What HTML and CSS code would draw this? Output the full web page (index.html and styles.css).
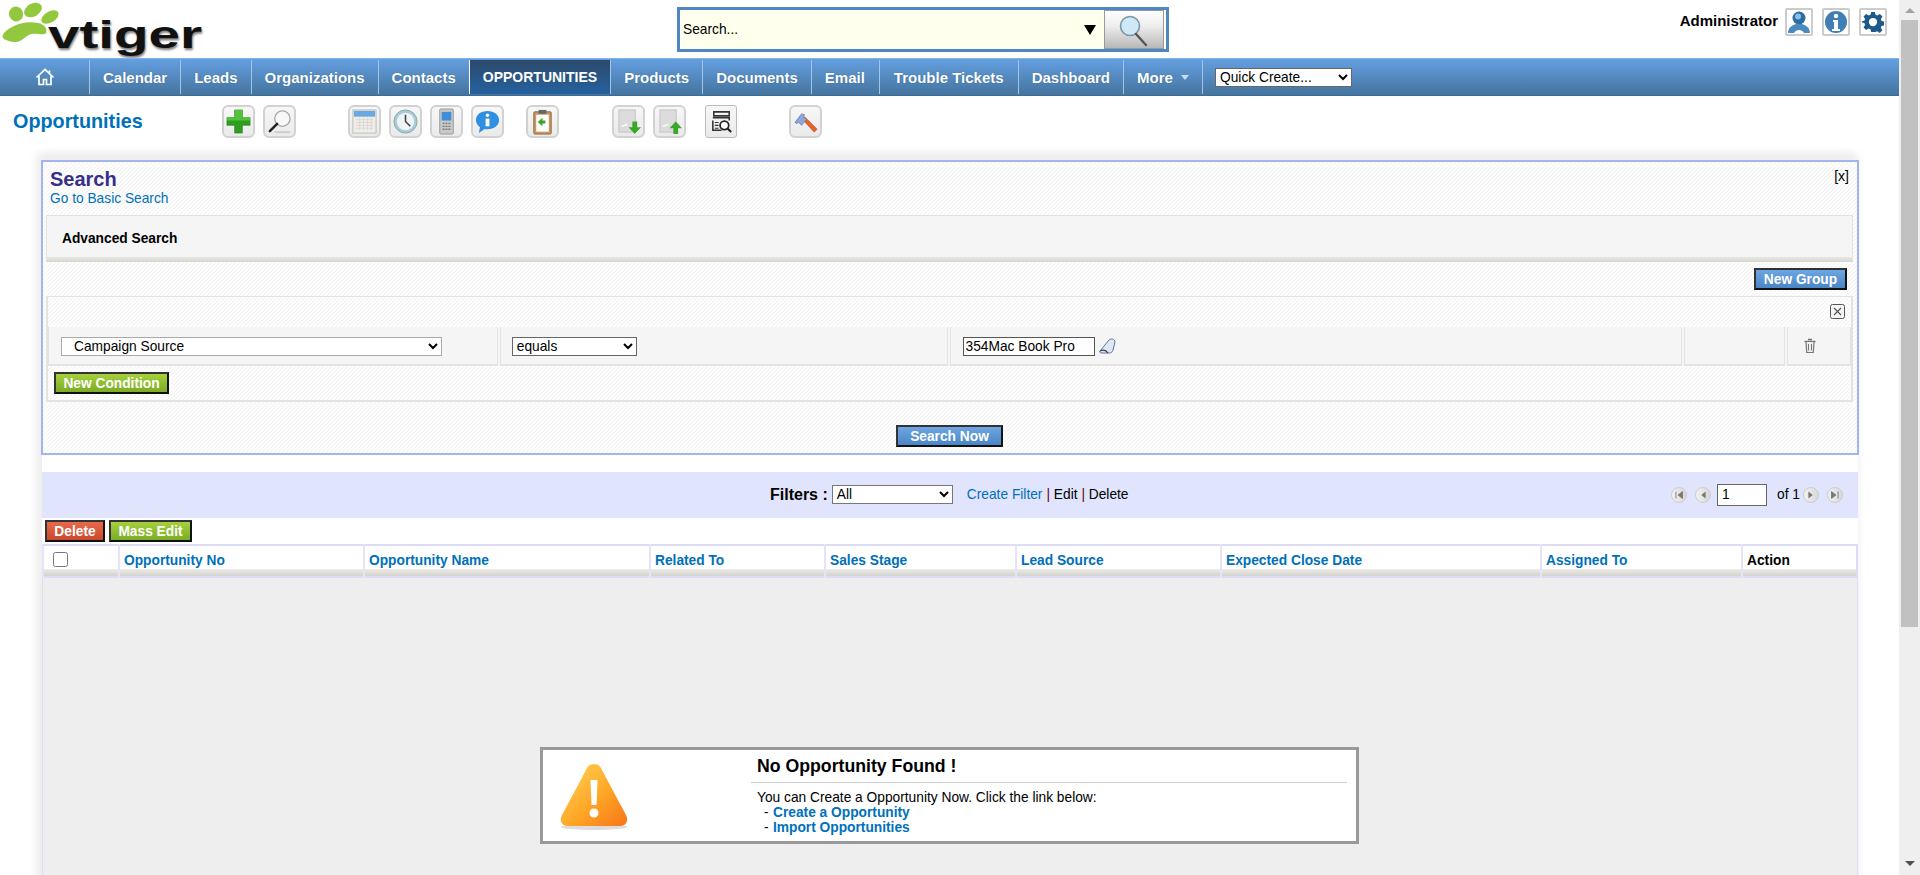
FILE: index.html
```html
<!DOCTYPE html>
<html lang="en">
<head>
    <meta charset="UTF-8">
    <title>vtiger - Opportunities</title>
    <link rel="stylesheet" href="styles.css">
</head>
<body>
<div class="page">
    <div class="main">
        <div class="topbar">
            <svg class="logo" viewBox="0 0 210 58" width="210" height="58">
                <g fill="#92c83e">
                    <ellipse cx="16" cy="14" rx="7" ry="7.500" transform="rotate(-25 16 14)"/>
                    <ellipse cx="33" cy="10" rx="9.500" ry="6.500" transform="rotate(-30 33 10)"/>
                    <ellipse cx="50" cy="17" rx="9.500" ry="5.500" transform="rotate(-30 50 17)"/>
                    <path d="M3 38c-2-3 3-8 9-11 7-4 18-6 26-4 6 1 10 6 8 10-2 3-9 0-14 1-7 1-10 9-18 8-5-.5-9-2-11-4z"/>
                </g>
                <text class="logo-shadow" x="49" y="50" textLength="154" lengthAdjust="spacingAndGlyphs">vtiger</text>
                <text class="logo-text" x="48" y="48" textLength="154" lengthAdjust="spacingAndGlyphs">vtiger</text>
            </svg>
            <div class="globalsearch">
                <span class="globalsearch-text">Search...</span>
                <span class="globalsearch-arrow"></span>
                <button class="globalsearch-btn" type="button">
                    <svg viewBox="0 0 34 34" width="34" height="34">
                        <circle cx="13" cy="13" r="9.500" fill="#cfe8f5" stroke="#7d96a6" stroke-width="1.600"/>
                        <path d="M19 21l10 11" stroke="#555" stroke-width="2.400" stroke-linecap="round"/>
                    </svg>
                </button>
            </div>
            <div class="userbox">
                <span class="username">Administrator</span>
                <span class="usericon">
                    <svg viewBox="0 0 24 24" width="24" height="24">
                        <circle cx="12" cy="8" r="6.500" fill="#2b6ca3"/>
                        <circle cx="11" cy="6.500" r="3" fill="#8fbde0"/>
                        <path d="M1 23c0-6 5-8 8-9h6c3 1 8 3 8 9h-6c-1-2-3-3-5-3s-4 1-5 3z" fill="#4a8abf"/>
                    </svg>
                </span>
                <span class="usericon">
                    <svg viewBox="0 0 24 24" width="24" height="24">
                        <circle cx="12" cy="12" r="11" fill="#3f7fb5"/>
                        <circle cx="12" cy="6" r="2.200" fill="#fff"/>
                        <path d="M9 10h5v9h2v2H8v-2h2v-7H9z" fill="#fff"/>
                    </svg>
                </span>
                <span class="usericon">
                    <svg viewBox="0 0 24 24" width="22" height="22">
                        <path fill="#1d5a8c" fill-rule="evenodd" d="M10 1h4l.7 3.200 2 .8L19.500 3.300l2.800 2.800-1.700 2.800.8 2 3.100.7v4l-3.200.7-.8 2 1.700 2.800-2.800 2.800-2.800-1.700-2 .8L14 23h-4l-.7-3.200-2-.8-2.800 1.700-2.800-2.800L3.400 15.100l-.8-2L-.5 12.400v-1l3.100-.7.8-2L1.700 6.100l2.800-2.800 2.800 1.700 2-.8zM12 7.500a4.500 4.500 0 1 0 0 9 4.500 4.500 0 0 0 0-9z"/>
                    </svg>
                </span>
            </div>
        </div>

        <div class="menubar">
            <a class="menu-home">
                <svg viewBox="0 0 20 18" width="20" height="18">
                    <path d="M1.500 9.500L10 1.500l8.500 8M4 8v8.500h4.500v-5h3v5H16V8M14.500 5V2.500" fill="none" stroke="#fff" stroke-width="1.700"/>
                </svg>
            </a>
            <a class="menu-item">Calendar</a>
            <a class="menu-item">Leads</a>
            <a class="menu-item">Organizations</a>
            <a class="menu-item">Contacts</a>
            <a class="menu-item menu-active">OPPORTUNITIES</a>
            <a class="menu-item">Products</a>
            <a class="menu-item">Documents</a>
            <a class="menu-item menu-email">Email</a>
            <a class="menu-item menu-wide">Trouble Tickets</a>
            <a class="menu-item">Dashboard</a>
            <a class="menu-item menu-more">More <span class="more-arrow"></span></a>
            <select class="quickcreate"><option>Quick Create...</option></select>
        </div>

        <div class="pagehead">
            <h1 class="pagetitle">Opportunities</h1>
            <div class="toolgroup">
                <span class="tool">
                    <svg viewBox="0 0 28 28"><path d="M10 2h8v8h8v8h-8v8h-8v-8H2v-8h8z" fill="#2f9e1f" stroke="#1f7a12" stroke-width=".6"/><path d="M10 2h8v8h8v3H2v-3h8z" fill="#53c23a"/></svg>
                </span>
                <span class="tool">
                    <svg viewBox="0 0 28 28"><circle cx="17" cy="11" r="8" fill="#f8f8f8" stroke="#aaa" stroke-width="1.400"/><path d="M11.500 16.500L4 24" stroke="#222" stroke-width="2.600" stroke-linecap="round"/><path d="M9 25h16" stroke="#ccc" stroke-width="2"/></svg>
                </span>
            </div>
            <div class="toolgroup gap-wide">
                <span class="tool">
                    <svg viewBox="0 0 28 28"><rect x="2" y="2" width="24" height="24" fill="#f0eee8" stroke="#bbb"/><rect x="3" y="3" width="22" height="6" fill="#6aa8e4"/><path d="M5 12h18M5 15h18M5 18h18M5 21h18M9 10v13M13 10v13M17 10v13M21 10v13" stroke="#d8d6d0" stroke-width=".8"/></svg>
                </span>
                <span class="tool">
                    <svg viewBox="0 0 28 28"><circle cx="14" cy="14" r="12" fill="#a9cbd8" stroke="#8aa"/><circle cx="14" cy="14" r="9" fill="#eef3f5"/><path d="M14 7v7l5 5" stroke="#444" stroke-width="1.600" fill="none"/></svg>
                </span>
                <span class="tool">
                    <svg viewBox="0 0 28 28"><rect x="7" y="1" width="14" height="26" rx="1" fill="#c9c9c9" stroke="#999"/><rect x="9" y="4" width="10" height="9" fill="#3f8fd8"/><path d="M10 16h8M10 19h8M10 22h8" stroke="#777" stroke-width="1.400" stroke-dasharray="2 1"/></svg>
                </span>
                <span class="tool">
                    <svg viewBox="0 0 28 28"><path d="M14 3c7 0 12 4 12 9.500S21 22 14 22c-1 0-2 0-3-.3L5 26l1.200-6C3.500 18 2 15.500 2 12.500 2 7 7 3 14 3z" fill="#2f8fe0"/><circle cx="14" cy="7.500" r="1.800" fill="#fff"/><path d="M12 11h4v8h-4z" fill="#fff"/></svg>
                </span>
            </div>
            <div class="toolgroup gap-narrow">
                <span class="tool">
                    <svg viewBox="0 0 28 28"><rect x="5" y="4" width="18" height="23" rx="1" fill="#c99a68" stroke="#8c6236"/><rect x="7.500" y="7" width="13" height="17.500" fill="#fff"/><rect x="10" y="2" width="8" height="4" fill="#666"/><path d="M14 10v3h3v3h-3v3l-5-4.500z" fill="#39a82a"/></svg>
                </span>
            </div>
            <div class="toolgroup gap-mid">
                <span class="tool">
                    <svg viewBox="0 0 28 28"><rect x="4" y="2" width="17" height="23" fill="#dcdcdc" stroke="#c4c4c4"/><path d="M7 19l6-2" stroke="#fff" stroke-width="1.500"/><path d="M18 14h5v6h4l-6.500 7-6.500-7h4z" fill="#39a82a"/></svg>
                </span>
                <span class="tool">
                    <svg viewBox="0 0 28 28"><rect x="4" y="2" width="17" height="23" fill="#dcdcdc" stroke="#c4c4c4"/><path d="M7 19l6-2" stroke="#fff" stroke-width="1.500"/><path d="M20.500 14l6.500 7h-4v6h-5v-6h-4z" fill="#39a82a"/></svg>
                </span>
                <span class="tool tool-plain gap-inner">
                    <svg viewBox="0 0 28 28"><path d="M6 4h16v4H6zM5 10h17v3M5 13v10h9" fill="none" stroke="#333" stroke-width="1.600"/><path d="M7 15h4M7 18h4M7 21h4" stroke="#333" stroke-width="1.200"/><circle cx="17" cy="18" r="4.500" fill="#fff" stroke="#222" stroke-width="1.800"/><path d="M20 21l4 4" stroke="#222" stroke-width="2.200"/></svg>
                </span>
            </div>
            <div class="toolgroup gap-wide">
                <span class="tool">
                    <svg viewBox="0 0 28 28"><path d="M11 12l12 13 3-3L13 9z" fill="#e8622a" stroke="#a8401a" stroke-width=".6"/><path d="M3 15l7-9 3 1-1 2 3 3-5 6-3-3-2 1z" fill="#8fa8d8" stroke="#5a74a8" stroke-width=".7"/></svg>
                </span>
            </div>
        </div>

        <div class="content">
            <div class="searchpanel">
                <span class="panel-close">[x]</span>
                <h2 class="panel-title">Search</h2>
                <a class="panel-link">Go to Basic Search</a>
                <div class="advbar">Advanced Search</div>
                <div class="groupbar"><button class="btn btn-blue" type="button">New Group</button></div>
                <div class="groupbox">
                    <div class="group-close">
                        <svg viewBox="0 0 15 15" width="15" height="15">
                            <rect x=".5" y=".5" width="14" height="14" rx="2" fill="#f4f4f4" stroke="#555"/>
                            <path d="M4 4l7 7M11 4l-7 7" stroke="#555" stroke-width="1.200"/>
                        </svg>
                    </div>
                    <div class="condrow">
                        <div class="cond-cell cond-field">
                            <select class="field-select"><option>Campaign Source</option></select>
                        </div>
                        <div class="cond-cell cond-op">
                            <select class="op-select"><option>equals</option></select>
                        </div>
                        <div class="cond-cell cond-value">
                            <input class="value-input" type="text" value="354Mac Book Pro">
                            <svg viewBox="0 0 20 16" width="20" height="16">
                                <path d="M2 13L11 2c2-2 6-1 6 2l-2 8c-1 3-3 3-5 3H4c-2 0-3-1-2-2z" fill="#dfe7f6" stroke="#5f7399"/>
                                <path d="M2 13c3-1.500 6-1 8 2" fill="none" stroke="#345" stroke-width="1.300"/>
                            </svg>
                        </div>
                        <div class="cond-cell cond-empty"></div>
                        <div class="cond-cell cond-del">
                            <svg viewBox="0 0 14 16" width="14" height="16">
                                <path d="M5 1.500h4M1.500 3.500h11" stroke="#777" stroke-width="1.400" fill="none"/>
                                <path d="M3 4l.7 10.500h6.600L11 4" fill="#eee" stroke="#777" stroke-width="1.200"/>
                                <path d="M5.500 6v6.500M8.500 6v6.500" stroke="#777"/>
                            </svg>
                        </div>
                    </div>
                    <button class="btn btn-green btn-newcond" type="button">New Condition</button>
                </div>
                <div class="searchnow"><button class="btn btn-blue" type="button">Search Now</button></div>
            </div>

            <div class="filterbar">
                <span class="filter-label">Filters :</span>
                <select class="filter-select"><option>All</option></select>
                <a class="filter-create">Create Filter</a>
                <span class="filter-links"><span class="pipe">|</span> Edit <span class="pipe">|</span> Delete</span>
                <div class="pager">
                    <span class="pagebtn"><svg viewBox="0 0 16 16" width="14" height="14"><path d="M4.500 4v8M12 4L7 8l5 4z" stroke="#777" fill="#777"/></svg></span>
                    <span class="pagebtn"><svg viewBox="0 0 16 16" width="14" height="14"><path d="M11 4L6 8l5 4z" fill="#777"/></svg></span>
                    <input class="page-input" type="text" value="1">
                    <span class="page-of">of 1</span>
                    <span class="pagebtn"><svg viewBox="0 0 16 16" width="14" height="14"><path d="M5 4l5 4-5 4z" fill="#777"/></svg></span>
                    <span class="pagebtn"><svg viewBox="0 0 16 16" width="14" height="14"><path d="M11.500 4v8M4 4l5 4-5 4z" stroke="#777" fill="#777"/></svg></span>
                </div>
            </div>

            <div class="actions">
                <button class="btn btn-red" type="button">Delete</button>
                <button class="btn btn-green" type="button">Mass Edit</button>
            </div>

            <table class="listview">
                <thead>
                    <tr>
                        <th class="col-check"><input type="checkbox"></th>
                        <th class="col-no">Opportunity No</th>
                        <th class="col-name">Opportunity Name</th>
                        <th class="col-related">Related To</th>
                        <th class="col-stage">Sales Stage</th>
                        <th class="col-source">Lead Source</th>
                        <th class="col-date">Expected Close Date</th>
                        <th class="col-owner">Assigned To</th>
                        <th class="col-action">Action</th>
                    </tr>
                </thead>
            </table>

            <div class="listbody">
                <div class="emptybox">
                    <div class="empty-icon">
                        <svg viewBox="0 0 72 70" width="72" height="70">
                            <defs>
                                <linearGradient id="warnfill" x1="0" y1="0" x2="1" y2="1">
                                    <stop offset="0" stop-color="#ffd65c"/>
                                    <stop offset=".55" stop-color="#ffa726"/>
                                    <stop offset="1" stop-color="#f7741a"/>
                                </linearGradient>
                            </defs>
                            <ellipse cx="36" cy="64" rx="33" ry="3" fill="#ddd"/>
                            <path d="M36 1c5 0 7 3 9 8l23 43c3 6 0 11-6 11H10c-6 0-9-5-6-11L27 9c2-5 4-8 9-8z" fill="url(#warnfill)"/>
                            <path d="M32.500 17h7l-1 25h-5z" fill="#fff"/>
                            <circle cx="36" cy="50" r="4.500" fill="#fff"/>
                        </svg>
                    </div>
                    <div class="empty-body">
                        <div class="empty-title">No Opportunity Found !</div>
                        <div class="empty-text">
                            You can Create a Opportunity Now. Click the link below:<br>
                            <span class="empty-dash">-</span><a class="empty-link">Create a Opportunity</a><br>
                            <span class="empty-dash">-</span><a class="empty-link">Import Opportunities</a>
                        </div>
                    </div>
                </div>
            </div>
        </div>
    </div>
    <div class="scrollbar">
        <span class="scroll-up"></span>
        <div class="scroll-thumb"></div>
        <span class="scroll-down"></span>
    </div>
</div>
</body>
</html>
```

FILE: styles.css
```css
html, body {
    margin: 0;
    padding: 0;
    height: 875px;
    overflow: hidden;
    background-color: #fff;
    font-family: "Liberation Sans", Arial, sans-serif;
    font-size: 13.75px;
    color: #000;
}

.page {
    display: flex;
    height: 875px;
}

.main {
    flex: 1;
    min-width: 0;
    overflow: hidden;
}

/* scrollbar */
.scrollbar {
    width: 21px;
    background-color: #efefef;
    position: relative;
}

.scroll-up {
    display: block;
    width: 0;
    margin: 8px 0 0 6px;
    border-left: 5px solid transparent;
    border-right: 5px solid transparent;
    border-bottom: 5px solid #a3a3a3;
}

.scroll-thumb {
    position: absolute;
    top: 20px;
    left: 2px;
    right: 2px;
    height: 607px;
    background-color: #c1c1c1;
}

.scroll-down {
    position: absolute;
    bottom: 9px;
    left: 6px;
    width: 0;
    border-left: 5px solid transparent;
    border-right: 5px solid transparent;
    border-top: 5px solid #505050;
}

/* top bar */
.topbar {
    display: flex;
    height: 58px;
    align-items: flex-start;
}

.logo {
    flex: none;
}

.logo-text, .logo-shadow {
    font-family: "Liberation Sans", Arial, sans-serif;
    font-weight: bold;
    font-size: 39px;
}

.logo-text {
    fill: #111;
}

.logo-shadow {
    fill: #777;
    filter: blur(1px);
}

.globalsearch {
    display: flex;
    align-items: center;
    box-sizing: border-box;
    width: 492px;
    height: 45px;
    margin: 7px 0 0 467px;
    border: 3px solid #4f86c4;
    background-color: #ffffee;
}

.globalsearch-text {
    flex: 1;
    padding-left: 3px;
}

.globalsearch-arrow {
    width: 0;
    margin-right: 8px;
    border-left: 6px solid transparent;
    border-right: 6px solid transparent;
    border-top: 10px solid #000;
}

.globalsearch-btn {
    display: flex;
    align-items: center;
    justify-content: center;
    box-sizing: border-box;
    width: 60px;
    height: 39px;
    margin-right: 2px;
    padding: 0;
    border: 1px solid #999;
    background: linear-gradient(#fff, #eee 40%, #b8b8b8);
}

.userbox {
    display: flex;
    align-items: center;
    margin: 8px 0 0 auto;
    padding-right: 12px;
}

.username {
    margin: 0 7px 3px 0;
    font-size: 15px;
    font-weight: bold;
}

.usericon {
    display: flex;
    align-items: center;
    justify-content: center;
    box-sizing: border-box;
    width: 28px;
    height: 28px;
    margin-right: 9px;
    border: 2px solid #ccc;
    border-radius: 2px;
}

.usericon:last-child {
    margin-right: 0;
}

/* main menu */
.menubar {
    display: flex;
    align-items: stretch;
    height: 38px;
    box-sizing: border-box;
    border-top: 1px solid #7db3ea;
    border-bottom: 1px solid #3d6b94;
    background: linear-gradient(#649fe0, #44749f);
}

.menu-home {
    display: flex;
    align-items: center;
    justify-content: center;
    width: 89px;
}

.menu-item {
    display: flex;
    align-items: center;
    margin: 1px 0;
    padding: 0 13px;
    border-left: 1px solid #a3c4e4;
    color: #fff;
    font-size: 15px;
    font-weight: bold;
    white-space: pre;
    text-shadow: 0 0 1px #33597f;
}

.menu-active {
    padding: 0 13px;
    border-left-color: #fff;
    background: linear-gradient(#2c4a6b, #25629f);
    font-size: 14px;
}

.menu-email {
    padding-right: 14px;
}

.menu-wide {
    padding: 0 14px;
}

.menu-more {
    border-right: 1px solid #a3c4e4;
}

.more-arrow {
    width: 0;
    margin: 1px 0 0 4px;
    border-left: 4px solid transparent;
    border-right: 4px solid transparent;
    border-top: 5px solid #c9dcf0;
}

.quickcreate {
    align-self: center;
    width: 137px;
    height: 19px;
    margin-left: 12px;
    border: 1px solid #666;
    background-color: #fff;
    font-family: "Liberation Sans", Arial, sans-serif;
    font-size: 13.75px;
}

/* page title + tools */
.pagehead {
    display: flex;
    align-items: flex-start;
    height: 52px;
    padding: 9px 0 0 13px;
    box-sizing: border-box;
}

.pagetitle {
    width: 209px;
    margin: 5px 0 0;
    color: #0070ba;
    font-size: 19.8px;
    font-weight: bold;
}

.toolgroup {
    display: flex;
    gap: 8px;
}

.gap-wide {
    margin-left: 52px;
}

.gap-mid {
    margin-left: 53px;
}

.gap-narrow {
    margin-left: 22px;
}

.gap-inner {
    margin-left: 11px;
}

.tool {
    display: flex;
    align-items: center;
    justify-content: center;
    box-sizing: border-box;
    width: 33px;
    height: 33px;
    border: 2px solid #d2d2d2;
    border-radius: 6px;
    background: linear-gradient(#f7f7f7, #eaeaea);
}

.tool svg {
    width: 27px;
    height: 27px;
    filter: blur(.4px);
}

.tool-plain {
    width: 32px;
    border-radius: 3px;
    border-width: 1px;
    border-color: #bbb;
}

/* content */
.content {
    margin: 0 41px 0 42px;
    box-shadow: -6px -6px 8px #eee, 0 -6px 8px #eee;
}

.searchpanel {
    position: relative;
    box-sizing: border-box;
    height: 295px;
    margin: 12px -1px 17px -1px;
    padding: 0 3px;
    border: 2px solid #a5b4ec;
    background: linear-gradient(135deg, #f6f6f6 25%, #fff 25%, #fff 50%, #f6f6f6 50%, #f6f6f6 75%, #fff 75%) 0 0 / 4px 4px;
}

.panel-close {
    position: absolute;
    top: 6px;
    right: 8px;
    font-size: 14px;
}

.panel-title {
    margin: 6px 0 0 4px;
    color: #372f8a;
    font-size: 20px;
    line-height: 23px;
    font-weight: bold;
}

.panel-link {
    display: block;
    margin-left: 4px;
    color: #0070ba;
    line-height: 16px;
}

.advbar {
    box-sizing: border-box;
    height: 47px;
    margin: 8px 1px 0 0;
    padding: 15px 0 0 15px;
    border: 1px solid #e2e2e2;
    border-bottom: 0;
    background: linear-gradient(#f5f5f5 88%, #e6e6e2 90%, #d6d6d0);
    font-weight: bold;
}

.groupbar {
    display: flex;
    justify-content: flex-end;
    height: 34px;
    padding: 6px 7px 0 0;
    box-sizing: border-box;
}

.btn {
    box-sizing: border-box;
    height: 22px;
    padding: 0 10px;
    border: 2px solid #111;
    border-top-color: #333;
    border-left-color: #333;
    color: #fff;
    font-family: "Liberation Sans", Arial, sans-serif;
    font-size: 13.75px;
    font-weight: bold;
}

.groupbar .btn {
    width: 93px;
    padding: 0;
}

.btn-blue {
    background: linear-gradient(#6ea6e2, #4a85c6);
}

.btn-green {
    background: linear-gradient(#a4d13c, #7cab26);
}

.btn-red {
    background: linear-gradient(#e8694a, #c9482e);
}

.groupbox {
    box-sizing: border-box;
    height: 106px;
    margin-right: 1px;
    border: 2px solid #e3e3e3;
    border-top-width: 1px;
}

.group-close {
    display: flex;
    justify-content: flex-end;
    height: 30px;
    padding: 7px 6px 0 0;
    box-sizing: border-box;
}

.condrow {
    display: flex;
    gap: 2px;
    height: 39px;
    background-color: #f5f5f5;
}

.cond-cell {
    display: flex;
    align-items: center;
    box-sizing: border-box;
    padding-top: 1px;
    border-left: 1px solid #e3e3e3;
    border-right: 1px solid #e3e3e3;
    border-bottom: 2px solid #e3e3e3;
}

.cond-field {
    width: 450px;
    padding-left: 12px;
}

.cond-op {
    width: 448px;
    padding-left: 11px;
}

.cond-value {
    width: 733px;
    padding-left: 12px;
    gap: 3px;
}

.cond-empty {
    width: 101px;
}

.cond-del {
    width: 64px;
    padding-left: 15px;
}

.condrow select, .condrow input {
    box-sizing: border-box;
    height: 19px;
    background-color: #fff;
    font-family: "Liberation Sans", Arial, sans-serif;
    font-size: 13.75px;
}

.field-select {
    width: 381px;
    padding-left: 8px;
    border: 1px solid #aaa;
}

.op-select {
    width: 125px;
    border: 1px solid #666;
}

.value-input {
    width: 132px;
    padding: 0 2px;
    border: 1px solid #555;
    color: #000;
}

.btn-newcond {
    display: block;
    margin: 6px 0 0 6px;
    padding: 0;
    width: 115px;
}

.searchnow {
    display: flex;
    justify-content: center;
    padding-top: 23px;
    margin-left: -1px;
}

.searchnow .btn {
    width: 107px;
    padding: 0;
}

/* filter bar */
.filterbar {
    display: flex;
    align-items: center;
    box-sizing: border-box;
    height: 46px;
    padding: 0 0 1px 728px;
    background-color: #e0e4fd;
}

.filter-label {
    margin-right: 4px;
    font-size: 16px;
    font-weight: bold;
}

.filter-select {
    width: 121px;
    height: 19px;
    margin-right: 14px;
    border: 1px solid #777;
    background-color: #fff;
    font-family: "Liberation Sans", Arial, sans-serif;
    font-size: 13.75px;
}

.filter-create {
    margin-right: 4px;
    color: #0070ba;
}

.pipe {
    color: #600;
}

.pager {
    display: flex;
    align-items: center;
    margin-left: auto;
    padding-right: 15px;
}

.pagebtn {
    display: flex;
    align-items: center;
    justify-content: center;
    box-sizing: border-box;
    width: 16px;
    height: 16px;
    margin-left: 8px;
    border: 1px solid #ccc;
    border-radius: 50%;
    background: linear-gradient(90deg, #f2f2f2, #d8d8d8);
}

.page-input {
    box-sizing: border-box;
    width: 50px;
    height: 22px;
    margin-left: 6px;
    padding: 0 4px;
    border: 1px solid #666;
    font-family: "Liberation Sans", Arial, sans-serif;
    font-size: 13.75px;
}

.page-of {
    margin: 0 -5px 0 10px;
}

/* list */
.actions {
    display: flex;
    gap: 4px;
    height: 26px;
    padding: 2px 0 0 3px;
    box-sizing: border-box;
}

.actions .btn {
    padding: 0;
}

.actions .btn-red {
    width: 60px;
}

.actions .btn-green {
    width: 83px;
}

.listview {
    width: 100%;
    height: 34px;
    table-layout: fixed;
    border-collapse: collapse;
    border: 2px solid #dddcf5;
}

.listview th {
    box-sizing: border-box;
    padding: 0 0 1px 4px;
    border-left: 2px solid #e4e3f7;
    background: linear-gradient(#fff 0, #fff 76%, #eceae6 78%, #d2d2ce 100%);
    color: #0070ba;
    font-size: 13.75px;
    font-weight: bold;
    text-align: left;
}

.listview th.col-action {
    color: #000;
}

.listview th.col-check {
    padding-left: 9px;
}

.listview input {
    width: 15px;
    height: 15px;
    margin: 0;
}

.col-check { width: 76px; }
.col-no { width: 245px; }
.col-name { width: 286px; }
.col-related { width: 175px; }
.col-stage { width: 191px; }
.col-source { width: 205px; }
.col-date { width: 320px; }
.col-owner { width: 201px; }

.listbody {
    box-sizing: border-box;
    height: 320px;
    padding: 169px 0 0 497px;
    border-left: 1px solid #dddcf5;
    border-right: 1px solid #dddcf5;
    background-color: #eee;
}

.emptybox {
    display: flex;
    box-sizing: border-box;
    width: 819px;
    height: 97px;
    border: 3px solid #999;
    background-color: #fff;
}

.empty-icon {
    width: 208px;
    padding: 13px 0 0 15px;
    box-sizing: border-box;
}

.empty-body {
    width: 596px;
}

.empty-title {
    box-sizing: border-box;
    height: 33px;
    padding: 6px 0 0 6px;
    border-bottom: 1px solid #ccc;
    font-size: 17.7px;
    font-weight: bold;
}

.empty-text {
    padding: 7px 0 0 6px;
    line-height: 15px;
}

.empty-dash {
    display: inline-block;
    width: 16px;
    padding-left: 7px;
    box-sizing: border-box;
}

.empty-link {
    color: #0070ba;
    font-weight: bold;
}
```
